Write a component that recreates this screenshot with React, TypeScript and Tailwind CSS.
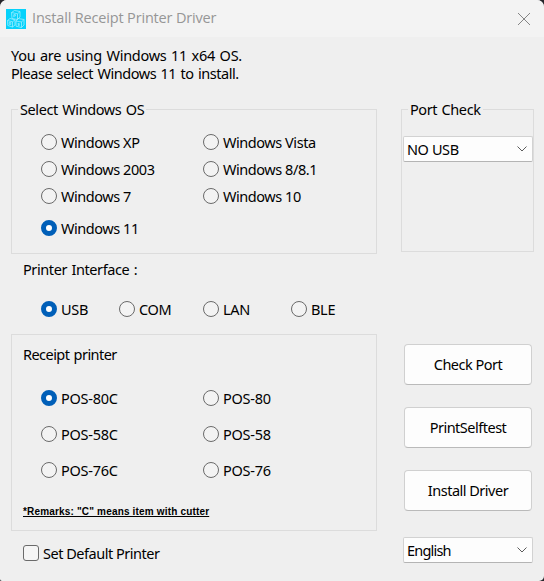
import React, { useState } from "react";

const osRows = [
  ["Windows XP", "Windows Vista"],
  ["Windows 2003", "Windows 8/8.1"],
  ["Windows 7", "Windows 10"],
  ["Windows 11"],
];
const interfaces = [
  { name: "USB", width: "w-[78px]" },
  { name: "COM", width: "w-[84px]" },
  { name: "LAN", width: "w-[88px]" },
  { name: "BLE", width: "w-[60px]" },
];
const printerRows = [
  ["POS-80C", "POS-80"],
  ["POS-58C", "POS-58"],
  ["POS-76C", "POS-76"],
];

const AppLogo = () => (
  <svg width="20" height="20" viewBox="0 0 20 20" className="bg-[#06d2fb]">
    <g fill="none" stroke="#9aeeff" strokeWidth="0.8">
      <path d="M5.5 3.5 8.5 1.5 14 2.5V8L11.5 10.5 6 9.5ZM5.5 3.5 11.5 4.8 14 2.5M11.5 4.8V10.5" />
      <path d="M1.5 11.5 4 9.5 9 10.8V16L6.5 18 1.8 16.5ZM1.5 11.5 6.5 12.8 9 10.8M6.5 12.8V18" />
      <path d="M10 12 12 9.5 18 10.5V16L15.5 18.5 10 17.2ZM10 12 15.5 13 18 10.5M15.5 13V18.5" />
      <path d="M7.8 8.2V5.6H9.4V7H7.8M3.2 13.4H4.8V15.4H3.2ZM13.6 14.4H12V15.4H13.4V16.4H11.8" />
    </g>
  </svg>
);

const Radio = ({ label, checked, onSelect, className = "" }) => (
  <button onClick={onSelect} className={`flex h-4 items-center gap-1 ${className}`}>
    <span
      className={`h-4 w-4 shrink-0 rounded-full ${
        checked ? "border-5 border-[#005fb8] bg-white" : "border border-[#6a6a6a] bg-[#f3f3f3]"
      }`}
    />
    <span className="whitespace-nowrap">{label}</span>
  </button>
);

const Combo = ({ value, className = "" }) => (
  <button className="flex h-[26px] w-[130px] items-center justify-between rounded-[2px] border border-[#d2d2d2] border-b-[#b4b4b4] bg-[#fdfdfd] pr-[5px] pl-[3px]">
    <span className={className}>{value}</span>
    <svg width="10" height="6" viewBox="0 0 10 6" fill="none" stroke="#5c5c5c">
      <path d="M0.5 0.5 5 5 9.5 0.5" />
    </svg>
  </button>
);

const PushButton = ({ children }) => (
  <button className="flex h-[41px] w-32 items-center justify-center rounded-[4px] border border-[#d0d0d0] border-b-[#bababa] bg-[#fdfdfd] pb-px">
    {children}
  </button>
);

export default function App() {
  const [os, setOs] = useState("Windows 11");
  const [iface, setIface] = useState("USB");
  const [printer, setPrinter] = useState("POS-80C");
  const [isDefault, setIsDefault] = useState(false);

  return (
    <div className="h-[581px] w-[544px] bg-[#26262b]">
      <div className="flex h-full flex-col overflow-hidden rounded-t-[7px] rounded-br-[5px] rounded-bl-[2px] bg-[#efefef] font-['Noto_Sans',sans-serif] text-[14.5px] leading-[18px] tracking-[-0.4px] [word-spacing:1px] text-black">
        <header className="flex h-[37px] shrink-0 items-center bg-[#f3f3f3] pr-[14px] pl-[6px]">
          <AppLogo />
          <h1 className="ml-[6px] pb-px font-['Open_Sans',sans-serif] text-[14.5px] tracking-[-0.17px] [word-spacing:0px] text-[#969696]">
            Install Receipt Printer Driver
          </h1>
          <svg className="ml-auto" width="12" height="12" viewBox="0 0 12 12" stroke="#858585">
            <path d="M0 0 12 12M12 0 0 12" />
          </svg>
        </header>

        <main className="flex pl-[11px]">
          <section className="w-[390px]">
            <div className="mt-[9px] h-[54px] whitespace-nowrap">
              <p className="tracking-[-0.26px]">You are using Windows 11 x64 OS.</p>
              <p className="tracking-[-0.45px]">Please select Windows 11 to install.</p>
            </div>

            <fieldset className="h-[154px] w-[366px] border border-[#dcdcdc]">
              <legend className="ml-[6px] px-[2px]">Select Windows OS</legend>
              <div className="mt-4 ml-[29px] flex flex-col gap-[11px]">
                {osRows.map((row) => (
                  <div key={row[0]} className="flex last:mt-[5px]">
                    {row.map((name) => (
                      <Radio
                        key={name}
                        label={name}
                        checked={os === name}
                        onSelect={() => setOs(name)}
                        className="w-[162px] tracking-[-0.45px]"
                      />
                    ))}
                  </div>
                ))}
              </div>
            </fieldset>

            <h2 className="mt-[6px] ml-3">Printer Interface :</h2>
            <div className="mt-[23px] ml-[30px] flex tracking-[-0.3px]">
              {interfaces.map(({ name, width }) => (
                <Radio
                  key={name}
                  label={name}
                  checked={iface === name}
                  onSelect={() => setIface(name)}
                  className={width}
                />
              ))}
            </div>

            <div className="mt-[17px] h-[197px] w-[366px] border border-[#dcdcdc] pt-[10px] pl-[11px]">
              <h2 className="tracking-[-0.55px]">Receipt printer</h2>
              <div className="mt-[27px] ml-[18px] flex flex-col gap-5">
                {printerRows.map((row) => (
                  <div key={row[0]} className="flex">
                    {row.map((name) => (
                      <Radio
                        key={name}
                        label={name}
                        checked={printer === name}
                        onSelect={() => setPrinter(name)}
                        className="w-[162px] tracking-[-0.25px]"
                      />
                    ))}
                  </div>
                ))}
              </div>
              <p className="mt-[28px] font-['Liberation_Sans',sans-serif] text-[10px] leading-3 font-bold tracking-[0.17px] [word-spacing:0px] underline">
                *Remarks: "C" means item with cutter
              </p>
            </div>

            <button
              onClick={() => setIsDefault(!isDefault)}
              className="mt-[14px] ml-3 flex h-4 items-center gap-1"
            >
              <span
                className={`h-4 w-4 rounded-[3px] border border-[#6a6a6a] ${
                  isDefault ? "bg-[#005fb8]" : "bg-[#f5f5f5]"
                }`}
              />
              <span className="tracking-[-0.48px]">Set Default Printer</span>
            </button>
          </section>

          <aside className="mt-[63px] w-[132px]">
            <fieldset className="h-[152px] border border-[#dcdcdc]">
              <legend className="ml-[6px] px-[2px]">Port Check</legend>
              <div className="mt-[18px] ml-px">
                <Combo value="NO USB" />
              </div>
            </fieldset>
            <div className="mt-[92px] mb-[26px] ml-[3px] flex flex-col gap-[22px] tracking-[-0.5px]">
              <PushButton>Check Port</PushButton>
              <PushButton>PrintSelftest</PushButton>
              <PushButton>Install Driver</PushButton>
            </div>
            <div className="ml-[2px]">
              <Combo value="English" className="tracking-[-0.8px]" />
            </div>
          </aside>
        </main>
      </div>
    </div>
  );
}
